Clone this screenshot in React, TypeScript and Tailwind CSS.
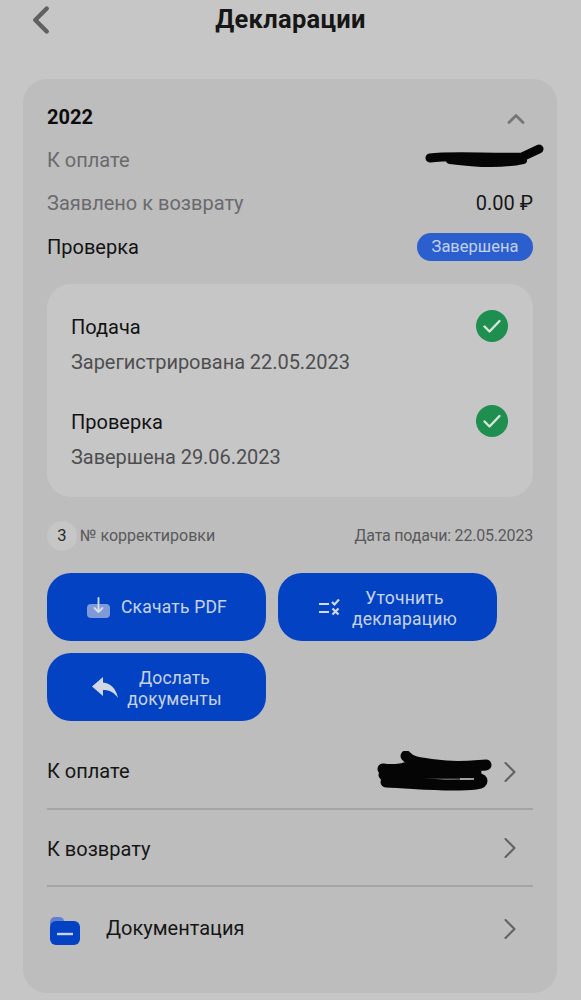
import { ChevronLeft, ChevronRight, ChevronUp } from "lucide-react";
import type { ReactNode } from "react";

function CheckBadge() {
	return (
		<svg viewBox="0 0 32 32" className="size-8 shrink-0">
			<circle cx="16" cy="16" r="16" fill="#1f8f4f" />
			<path d="M8.5 16.5l5 5 10-10.5" fill="none" stroke="#d8e4dc" strokeWidth="2.4" strokeLinecap="round" strokeLinejoin="round" />
		</svg>
	);
}

function StepRow({ title, note, className }: { title: string; note: string; className?: string }) {
	return (
		<div className={className}>
			<div className="flex h-8 items-center justify-between">
				<span className="pt-[2px] text-[20px] text-[#131313]">{title}</span>
				<CheckBadge />
			</div>
			<div className="mt-[4px] text-[20px] leading-8 tracking-[-0.05px] text-[#4e4e50]">{note}</div>
		</div>
	);
}

function ActionButton({ icon, children, twoLine, gap }: { icon: ReactNode; children: ReactNode; twoLine?: boolean; gap: string }) {
	return (
		<button
			type="button"
			className={`flex h-[68px] w-[219px] items-center justify-center rounded-[24px] bg-[#0343c3] pl-[1px] text-center text-[17.5px] leading-[21px] tracking-[0.2px] text-[#c9d3e8] ${gap}`}
		>
			{icon}
			<span className={twoLine ? "pt-[3px]" : ""}>{children}</span>
		</button>
	);
}

function LinkRow({ children, scribble, textClass }: { children: ReactNode; scribble?: ReactNode; textClass?: string }) {
	return (
		<div className="relative flex h-full items-center justify-between">
			<div className={`flex items-center text-[20px] text-[#161616] ${textClass ?? ""}`}>{children}</div>
			{scribble}
			<ChevronRight className="mr-[5px] mt-[1px] size-[36px] text-[#626264]" strokeWidth={1.4} />
		</div>
	);
}

export default function App() {
	return (
		<div className="h-[1000px] w-[581px] overflow-hidden bg-[#c6c6c6] font-['Roboto',sans-serif]">
			<header className="relative flex h-[79px] justify-center">
				<ChevronLeft className="absolute left-[18px] top-[-3px] size-[46px] text-[#5f6062]" strokeWidth={2.3} />
				<h1 className="mt-[3px] text-[25.5px] leading-8 font-bold tracking-[0.3px] text-[#161616]">Декларации</h1>
			</header>

			<main className="ml-[23px] h-[914px] w-[534px] rounded-[24px] bg-[#bdbdbd] px-6 pt-[22px]">
				<div className="flex h-8 items-center justify-between">
					<span className="text-[20px] font-bold text-[#0c0c0c]">2022</span>
					<ChevronUp className="mt-[3px] mr-[3px] size-[28px] text-[#76767a]" strokeWidth={2.4} />
				</div>

				<div className="relative mt-[11px] flex h-8 items-center text-[20px] text-[#6a6a6e]">
					<span>К оплате</span>
					<svg viewBox="0 0 124 32" className="absolute right-[-11px] top-[-4px] h-8 w-[124px]">
						<path d="M10 18C30 15 70 18 102 17L119 9" fill="none" stroke="#050505" strokeWidth="9" strokeLinecap="round" strokeLinejoin="round" />
						<path d="M30 20C60 24 85 24 103 20" fill="none" stroke="#050505" strokeWidth="8" strokeLinecap="round" />
					</svg>
				</div>
				<div className="mt-[11px] flex h-8 items-center justify-between text-[20px]">
					<span className="text-[#6a6a6e]">Заявлено к возврату</span>
					<span className="text-[#161616]">0.00 ₽</span>
				</div>
				<div className="mt-3 flex h-8 items-center justify-between">
					<span className="text-[20px] text-[#131313]">Проверка</span>
					<span className="flex h-[28px] w-[116px] items-center justify-center rounded-full bg-[#2b5fce] text-[16.5px] text-[#c4d2ee]">Завершена</span>
				</div>

				<section className="mt-[21px] h-[213px] rounded-[24px] bg-[#c6c6c6] pt-[26px] pr-[25px] pl-6">
					<StepRow title="Подача" note="Зарегистрирована 22.05.2023" />
					<StepRow title="Проверка" note="Завершена 29.06.2023" className="mt-[27px]" />
				</section>

				<div className="mt-[24px] flex h-[30px] items-center justify-between">
					<div className="flex items-center gap-[3px] text-[16px] text-[#59595c]">
						<span className="flex size-[30px] items-center justify-center rounded-full bg-[#c6c6c6] text-[16.5px] text-[#2a2a2c]">3</span>
						<span>№ корректировки</span>
					</div>
					<span className="text-[16px] tracking-[-0.2px] text-[#59595c]">Дата подачи: 22.05.2023</span>
				</div>

				<div className="mt-[22px] flex flex-wrap gap-3">
					<ActionButton
						gap="gap-[11px]"
						icon={
							<svg viewBox="0 0 23 21" className="h-[21px] w-[23px]">
								<rect y="7" width="23" height="14" rx="4" fill="#7f9ad8" />
								<path d="M11.5 1v14M7.5 11l4 4 4-4" fill="none" stroke="#d6deee" strokeWidth="1.8" strokeLinecap="round" strokeLinejoin="round" />
							</svg>
						}
					>
						Скачать PDF
					</ActionButton>
					<ActionButton
						gap="gap-[12px]"
						twoLine
						icon={
							<svg viewBox="0 0 21 17" className="h-[17px] w-[21px]">
								<path d="M0 5h10M0 13h10" stroke="#d2daec" strokeWidth="2" />
								<path d="M13 3l2.500 2.500L20 .5M13.500 9.500l6 6M19.500 9.500l-6 6" fill="none" stroke="#d2daec" strokeWidth="2.200" />
							</svg>
						}
					>
						Уточнить
						<br />
						декларацию
					</ActionButton>
					<ActionButton
						gap="gap-[9px]"
						twoLine
						icon={
							<svg viewBox="0 0 26 21" className="h-[21px] w-[26px]">
								<path d="M0 9.500L11 0v5.500c7 .500 13 5.500 15 15.500-4-5.500-8-8-15-8v6z" fill="#d2d8e4" />
							</svg>
						}
					>
						Дослать
						<br />
						документы
					</ActionButton>
				</div>

				<div className="mt-[13px]">
					<div className="h-[76px] border-b-2 border-[#a4a4a4]">
						<LinkRow
							scribble={
								<svg viewBox="0 0 116 42" className="absolute right-[41px] top-[17px] h-[42px] w-[116px]">
									<path d="M7 18C20 20 30 17 45 13M30 5C36 12 45 12 60 14C80 17 95 15 110 14M8 24C40 22 70 22 100 22M10 31C40 32 70 36 100 33C108 32 108 28 100 27" fill="none" stroke="#050505" strokeWidth="11" strokeLinecap="round" strokeLinejoin="round" />
									<path d="M84 28h14" stroke="#c9c9c9" strokeWidth="1.5" />
								</svg>
							}
						>
							К оплате
						</LinkRow>
					</div>
					<div className="h-[77px] border-b-2 border-[#a4a4a4]">
						<LinkRow textClass="pt-[2px]">К возврату</LinkRow>
					</div>
					<div className="h-[82px]">
						<LinkRow>
							<svg viewBox="0 0 30 30" className="mt-1 mr-[26px] ml-[3px] size-[30px]">
								<path d="M0 7a5 5 0 015-5h5a5 5 0 014 4v4H0z" fill="#5f81cf" />
								<rect y="6" width="30" height="24" rx="6" fill="#0343c3" />
								<path d="M7 19h16" stroke="#c8d4ee" strokeWidth="2.400" />
							</svg>
							Документация
						</LinkRow>
					</div>
				</div>
			</main>
		</div>
	);
}
